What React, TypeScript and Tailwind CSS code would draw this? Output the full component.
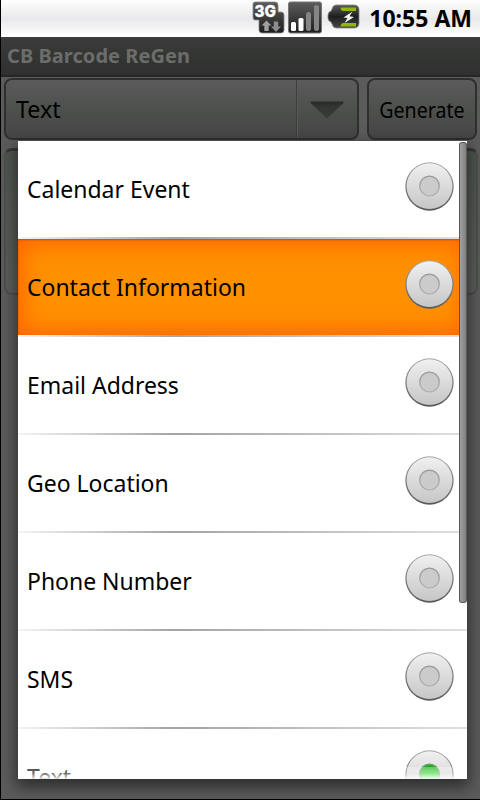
const options = [
    "Calendar Event",
    "Contact Information",
    "Email Address",
    "Geo Location",
    "Phone Number",
    "SMS",
    "Text",
]

function NetworkIcon() {
    return (
        <svg width="33" height="33" viewBox="0 0 33 33">
            <defs>
                <linearGradient id="net" x1="0" y1="0" x2="0" y2="1">
                    <stop offset="0" stopColor="#5c5c5c" />
                    <stop offset="1" stopColor="#1c1c1c" />
                </linearGradient>
            </defs>
            <path
                d="M3 1H23Q26 1 26 4V11H29Q32 11 32 14V29Q32 32 29 32H10Q7 32 7 29V19H3Q1 19 1 16V3Q1 1 3 1Z"
                fill="url(#net)"
                stroke="#888"
                strokeWidth="0.8"
            />
            <text
                x="2.5"
                y="16"
                fill="#fff"
                stroke="#fff"
                strokeWidth="0.3"
                textLength="21.5"
                lengthAdjust="spacingAndGlyphs"
                className="font-['Inter',sans-serif] text-[16px] font-extrabold"
            >
                3G
            </text>
            <path d="M14.500 19.500L19.500 24.500H16.700V30H12.300V24.500H9.500Z" fill="#a0a0a0" />
            <path d="M24 31L29 25.500H26.200V20.500H21.800V25.500H19Z" fill="#8c8c8c" />
        </svg>
    )
}

function SignalIcon() {
    return (
        <svg width="34" height="33" viewBox="0 0 34 33">
            <defs>
                <linearGradient id="sig" x1="0" y1="0" x2="0" y2="1">
                    <stop offset="0" stopColor="#5c5c5c" />
                    <stop offset="1" stopColor="#1e1e1e" />
                </linearGradient>
            </defs>
            <rect x="0.500" y="1" width="33" height="31" rx="2" fill="url(#sig)" stroke="#777" />
            <rect x="3" y="21" width="5" height="9" rx="1.500" fill="#fff" />
            <rect x="10.500" y="17" width="5" height="13" rx="1.500" fill="#fff" />
            <rect x="18" y="11" width="5" height="19" rx="2.500" fill="#858585" />
            <rect x="26" y="4" width="5" height="26" rx="2.500" fill="#858585" />
        </svg>
    )
}

function BatteryIcon() {
    return (
        <svg width="34" height="26" viewBox="0 0 34 26">
            <defs>
                <linearGradient id="bat" x1="0" y1="0" x2="0" y2="1">
                    <stop offset="0" stopColor="#5a5a5a" />
                    <stop offset="0.500" stopColor="#1e1e1e" />
                    <stop offset="1" stopColor="#484848" />
                </linearGradient>
            </defs>
            <path
                d="M9 1H27Q32 1 32 6V19Q32 24 27 24H9Q6 24 5 20L4 18Q1 17 1 14V11Q1 8 4 7L5 5Q6 1 9 1Z"
                fill="url(#bat)"
                stroke="#888"
                strokeWidth="0.800"
            />
            <path d="M13.500 3.500H29V7H16Q14 7 13.500 3.500ZM13.500 22.500Q14 19 16 19H29V22.500Z" fill="#8fb80c" />
            <path d="M25.500 7.500L16.500 13.500L20.500 14L17.500 19L27 13L22.500 12.200Z" fill="#f5f5f5" />
        </svg>
    )
}

function Radio({ checked }: { checked: boolean }) {
    return (
        <svg width="50" height="50" viewBox="0 0 50 50">
            <defs>
                <linearGradient id="disc" x1="0" y1="0" x2="0" y2="1">
                    <stop offset="0" stopColor="#f0f0f0" />
                    <stop offset="1" stopColor="#c6c6c6" />
                </linearGradient>
                <linearGradient id="rim" x1="0" y1="0" x2="0" y2="1">
                    <stop offset="0" stopColor="#a8a8a8" />
                    <stop offset="1" stopColor="#585858" />
                </linearGradient>
                <linearGradient id="ring" x1="0" y1="0" x2="0" y2="1">
                    <stop offset="0" stopColor="#999" />
                    <stop offset="1" stopColor="#b0b0b0" />
                </linearGradient>
                <linearGradient id="dotOn" x1="0" y1="0" x2="0" y2="1">
                    <stop offset="0" stopColor="#1f9a1f" />
                    <stop offset="0.400" stopColor="#30d030" />
                    <stop offset="1" stopColor="#50f050" />
                </linearGradient>
            </defs>
            <circle cx="25.500" cy="25.500" r="24.200" fill="url(#rim)" />
            <circle cx="25.500" cy="25.200" r="22.900" fill="url(#disc)" />
            <circle
                cx="25.500"
                cy="25"
                r="9.800"
                fill={checked ? "url(#dotOn)" : "#cbcbcb"}
                stroke={checked ? "#6fa06f" : "url(#ring)"}
                strokeWidth="1.300"
            />
        </svg>
    )
}

function StatusBar() {
    return (
        <div className="flex h-[37px] items-start justify-end bg-linear-to-b from-white via-[#e9e8ea] to-white pr-[8px]">
            <div className="flex pt-[1px]">
                <NetworkIcon />
                <div className="ml-[3px]">
                    <SignalIcon />
                </div>
                <div className="ml-[5px] pt-[3px]">
                    <BatteryIcon />
                </div>
            </div>
            <span className="ml-[8px] text-[23px] leading-[37px] font-bold whitespace-nowrap text-black">10:55 AM</span>
        </div>
    )
}

function OptionList() {
    return (
        <div className="absolute top-[141px] left-[17px] h-[638px] w-[449px] overflow-hidden bg-white shadow-[0_6px_14px_2px_rgba(0,0,0,0.5)]">
            {options.map((name) => (
                <div key={name}>
                    <div
                        className={
                            name === "Contact Information"
                                ? "flex h-24 items-center justify-between bg-[#ff9000] pr-[13px] pl-[9px] shadow-[inset_0_1px_2px_#b8500c,inset_0_0_22px_5px_#ff6600]"
                                : "flex h-24 items-center justify-between pr-[13px] pl-[9px]"
                        }
                    >
                        <span className="origin-left scale-x-[0.957] text-[24px] leading-8 text-black">{name}</span>
                        <div className="pb-[6px]">
                            <Radio checked={name === "Text"} />
                        </div>
                    </div>
                    <div className="h-[2px] bg-linear-to-r from-[#f4f4f4] via-[#a4a4a4] via-35% to-[#e0e0e0]" />
                </div>
            ))}
            <div className="absolute bottom-0 left-0 h-3 w-full bg-linear-to-b from-white/30 via-white/40 to-white/90" />
            <div className="absolute top-[1px] right-0 h-[461px] w-[8px] rounded-[3px] border border-[#505050]/85 bg-linear-to-r from-[#a0a0a0] to-[#808080]" />
        </div>
    )
}

export default function App() {
    return (
        <div className="relative h-[800px] w-[480px] overflow-hidden border-b border-l border-black bg-[#5b5b5b] font-['Noto_Sans','Open_Sans',sans-serif]">
            <StatusBar />
            <div className="h-10 border-b-2 border-[#262626] bg-linear-to-b from-[#3c3c3c] via-[#343633] to-[#303030] pl-[6px]">
                <h1 className="text-[20px] leading-[37px] font-bold tracking-[0.05px] text-[#6b6d6b]">CB Barcode ReGen</h1>
            </div>
            <div className="flex gap-[7px] pt-[1px] pl-[3px]">
                <div className="flex h-[62px] w-[355px] rounded-lg border-2 border-[#2e302e] bg-linear-to-b from-[#5b5b5b] via-[#4d504d] to-[#464646]">
                    <div className="flex-1 pl-[10px] text-[24px] leading-[58px] text-black">
                        <span className="inline-block origin-left scale-x-[0.97]">Text</span>
                    </div>
                    <div className="flex w-[61px] items-center justify-center border-l border-[#3c3e3c] pt-[2px] shadow-[inset_1px_0_0_#5a5c5a]">
                        <svg width="34" height="18" viewBox="0 0 34 18">
                            <defs>
                                <linearGradient id="arrow" x1="0" y1="0" x2="0" y2="1">
                                    <stop offset="0" stopColor="#282a28" />
                                    <stop offset="0.3" stopColor="#333533" />
                                    <stop offset="1" stopColor="#3a3c3a" />
                                </linearGradient>
                            </defs>
                            <path d="M0.5 0.5H33.500V2L17 17.500L0.500 2Z" fill="url(#arrow)" />
                        </svg>
                    </div>
                </div>
                <button className="ml-[1px] h-[62px] w-[110px] rounded-lg border-2 border-[#2e302e] bg-linear-to-b from-[#5b5b5b] via-[#4d504d] to-[#464646] text-[22px] text-black">
                    <span className="-mx-2 inline-block scale-x-[0.89]">Generate</span>
                </button>
            </div>
            <div className="mt-[8px] ml-[3px] h-[147px] w-[474px] rounded-lg border-2 border-t-[3px] border-[#4c4f4c] border-t-[#343634] bg-linear-to-b from-[#505550] to-[#5c5e5c]" />
            <OptionList />
        </div>
    )
}
